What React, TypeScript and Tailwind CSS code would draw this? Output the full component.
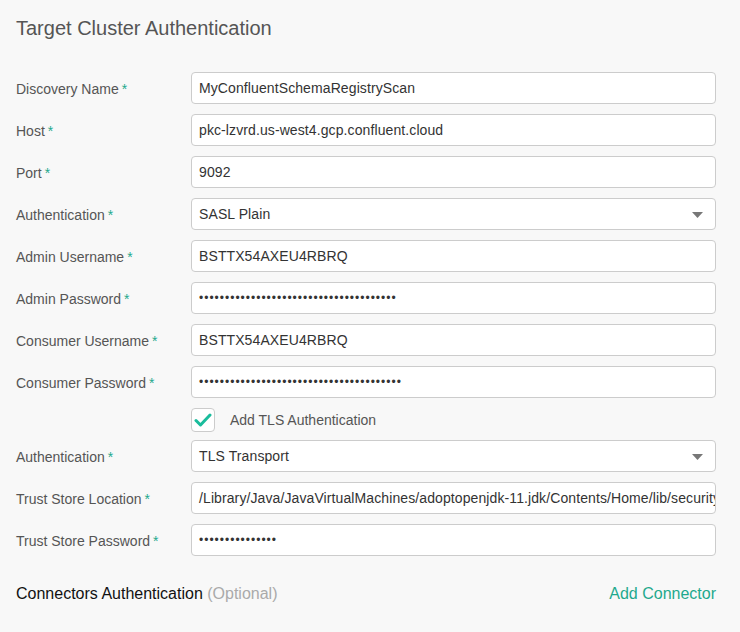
import React from 'react';

const font = { fontFamily: '"Liberation Sans", Arial, sans-serif' };

type Row = { label: string; value: string; kind?: 'text' | 'password' | 'select' };

const topRows: Row[] = [
  { label: 'Discovery Name', value: 'MyConfluentSchemaRegistryScan' },
  { label: 'Host', value: 'pkc-lzvrd.us-west4.gcp.confluent.cloud' },
  { label: 'Port', value: '9092' },
  { label: 'Authentication', value: 'SASL Plain', kind: 'select' },
  { label: 'Admin Username', value: 'BSTTX54AXEU4RBRQ' },
  { label: 'Admin Password', value: '•'.repeat(38), kind: 'password' },
  { label: 'Consumer Username', value: 'BSTTX54AXEU4RBRQ' },
  { label: 'Consumer Password', value: '•'.repeat(39), kind: 'password' },
];

const tlsRows: Row[] = [
  { label: 'Authentication', value: 'TLS Transport', kind: 'select' },
  { label: 'Trust Store Location', value: '/Library/Java/JavaVirtualMachines/adoptopenjdk-11.jdk/Contents/Home/lib/security/cacerts' },
  { label: 'Trust Store Password', value: '•'.repeat(15), kind: 'password' },
];

function FieldRow({ row }: { row: Row }) {
  return (
    <div className="flex items-center h-8">
      <label className="w-[175px] shrink-0 text-[14px] text-[#555] pt-[2px]">
        {row.label}
        <span className="text-[#1fa98d] ml-[3px]">*</span>
      </label>
      <div className="flex-1 min-w-0 h-8 bg-white border border-[#ccc] rounded-[4px] flex items-center px-[7px] overflow-hidden relative">
        <span
          className={
            row.kind === 'password'
              ? 'text-[12px] tracking-[1px] text-[#333] whitespace-nowrap'
              : 'text-[14px] tracking-[0.1px] text-[#333] whitespace-nowrap'
          }
        >
          {row.value}
        </span>
        {row.kind === 'select' && (
          <svg className="absolute right-[12px] top-[13px]" width="11" height="6" viewBox="0 0 11 6">
            <path d="M0 0 L11 0 L5.5 6 Z" fill="#777" />
          </svg>
        )}
      </div>
    </div>
  );
}

export default function App() {
  return (
    <div className="w-[740px] h-[632px] bg-[#f8f8f8] px-4 pt-[15px] overflow-hidden" style={font}>
      <h2 className="text-[20px] text-[#555] leading-[26px]">Target Cluster Authentication</h2>
      <div className="mt-[31px] pr-[8px] flex flex-col gap-[10px]">
        {topRows.map((r, i) => (
          <FieldRow key={i} row={r} />
        ))}
        <div className="flex items-start h-[22px] pl-[175px]">
          <div className="w-6 h-6 shrink-0 bg-white border border-[#ccc] rounded-[4px] flex items-center justify-center">
            <svg width="18" height="14" viewBox="0 0 18 14">
              <path d="M2 7.5 L6.5 12 L16 2" fill="none" stroke="#1abc9c" strokeWidth="3" strokeLinecap="round" strokeLinejoin="round" />
            </svg>
          </div>
          <span className="ml-[15px] text-[14px] text-[#555] leading-6">Add TLS Authentication</span>
        </div>
        {tlsRows.map((r, i) => (
          <FieldRow key={i} row={r} />
        ))}
      </div>
      <div className="mt-[26px] pr-[8px] flex items-center justify-between">
        <div className="text-[16px] text-[#111]">
          Connectors Authentication <span className="text-[#aaa]">(Optional)</span>
        </div>
        <button className="text-[16px] text-[#1fa98d]">Add Connector</button>
      </div>
    </div>
  );
}
